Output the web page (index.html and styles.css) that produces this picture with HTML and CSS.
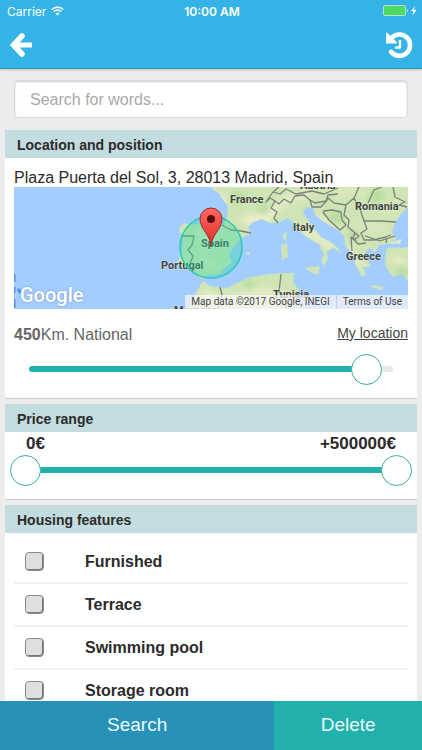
FILE: index.html
```html
<!DOCTYPE html>
<html lang="en">
<head>
    <meta charset="UTF-8">
    <meta name="viewport" content="width=device-width, initial-scale=1.0">
    <title>Search</title>
    <link rel="stylesheet" href="styles.css">
</head>
<body>
    <header class="header">
        <div class="status-bar">
            <div class="carrier">
                <span>Carrier</span>
                <svg width="13" height="10" viewBox="0 0 13 10" fill="none" stroke="#fff" stroke-width="1.5">
                    <path d="M.7 3.6Q6.5-1.4 12.3 3.6M2.7 5.7Q6.5 2.4 10.3 5.7"/>
                    <path d="M4.4 7.4Q6.5 5.7 8.6 7.4L6.5 9.6Z" fill="#fff" stroke="none"/>
                </svg>
            </div>
            <span class="clock">10:00 AM</span>
            <div class="battery">
                <svg width="34" height="12" viewBox="0 0 34 12">
                    <rect x=".5" y=".5" width="22" height="10" rx="1.5" fill="#4cd964" stroke="#b5e3ce"/>
                    <path d="M24 4Q26 5.500 24 7Z" fill="#d7f0fa"/>
                    <path d="M32 1L28 6.300H30.500L29.500 10.500L33.500 5H31Z" fill="#fff"/>
                </svg>
            </div>
        </div>
        <div class="nav-bar">
            <button class="icon-button" aria-label="Back">
                <svg width="26" height="26" viewBox="0 0 26 26" fill="none" stroke="#fff">
                    <path d="M13 4L4.500 13L13 22" stroke-width="5.500" stroke-linecap="round" stroke-linejoin="miter"/>
                    <path d="M5 13H22" stroke-width="5"/>
                    <path d="M22 11.500V14.500" stroke-width="2" stroke-linejoin="round" stroke-linecap="round"/>
                </svg>
            </button>
            <button class="icon-button" aria-label="History">
                <svg width="28" height="28" viewBox="0 0 28 28" fill="none" stroke="#fff">
                    <path d="M6 7.500A10.700 10.700 0 1 1 6 20.800" stroke-width="4.600" stroke-linecap="round"/>
                    <path d="M1.800 2.300V11.700H11.300Z" fill="#fff" stroke-width="1.500" stroke-linejoin="round"/>
                    <path d="M15 9V16.500H10" stroke-width="2.400" stroke-linejoin="round"/>
                </svg>
            </button>
        </div>
    </header>

    <main class="content">
        <div class="search-box">
            <input type="search" class="search-input" placeholder="Search for words..." aria-label="Search for words">
        </div>

        <section class="card">
            <h2>Location and position</h2>
            <div class="location">
                <p class="address">Plaza Puerta del Sol, 3, 28013 Madrid, Spain</p>
                <div class="map">
                    <svg class="map-canvas" viewBox="0 0 394 122" preserveAspectRatio="xMidYMid slice">
                        <defs>
                            <linearGradient id="pin" x1="0" y1="0" x2="0" y2="1">
                                <stop offset="0" stop-color="#ff6a61"/>
                                <stop offset="1" stop-color="#dc2d28"/>
                            </linearGradient>
                            <filter id="relief">
                                <feGaussianBlur stdDeviation="3"/>
                            </filter>
                            <clipPath id="landmass">
                                <path id="land" d="M197 0L201 4L206 7L209 13L214 19L213 30L209 38L200 38L189 36L178 38L170 36L165 41L166 46L169 51L168 65L163 76L168 81L176 83L180 87L189 92L194 88L206 87L211 81L218 75L215 69L219 60L228 51L237 46L234 40L239 35L248 32L256 36L264 36L274 31L279 36L287 46L297 53L305 57L310 68L307 74L310 79L314 71L313 64L320 61L327 67L324 61L315 54L307 50L300 41L295 34L289 26L292 20L299 21L301 28L310 35L324 43L330 49L331 58L338 66L340 71L342 79L348 90L352 87L349 80L357 80L353 72L351 65L356 61L361 65L365 58L374 57L382 52L378 45L382 34L389 25L394 20V0Z
                                    M372 63L379 58L386 61L394 60V94L388 87L379 90L371 79Z
                                    M176 122L180 109L184 102L189 94L196 99L213 101L223 96L236 90L256 87L267 86L280 86L279 95L285 103L282 111L290 122Z
                                    M291 81L306 79L304 88L298 86Z
                                    M267 58L273 56L274 70L268 73Z
                                    M269 47L273 44L272 54L269 52Z
                                    M356 98L370 100L367 103L359 101Z"/>
                            </clipPath>
                        </defs>
                        <rect width="394" height="122" fill="#a3ccff"/>
                        <use href="#land" fill="#cfe5b5"/>
                        <g clip-path="url(#landmass)">
                            <g filter="url(#relief)" fill="none" stroke="#f2efcf" stroke-width="5">
                                <path d="M228 33L258 26L272 12L296 6M203 5L212 18M286 40L320 62M333 60L345 80M378 72L394 78M190 104L206 114L250 104L278 112M301 31L326 41M234 36L256 33"/>
                                <path d="M320 5L350 5L372 21L388 16M344 38L371 42M180 43L192 50L187 76L207 80" stroke="#e2eac0"/>
                            </g>
                            <g filter="url(#relief)" fill="#b7dd9d">
                                <circle cx="224" cy="11" r="7"/>
                                <circle cx="249" cy="22" r="5"/>
                                <circle cx="322" cy="31" r="7"/>
                                <circle cx="339" cy="48" r="5"/>
                                <circle cx="362" cy="9" r="8"/>
                                <circle cx="388" cy="85" r="6"/>
                                <circle cx="235" cy="97" r="5"/>
                            </g>
                        </g>
                        <path d="M232 66L234 65L236 66L235 68Z M374 56L388 52L385 59Z M343 73L350 75L354 80L350 79Z M363 71L366 70L365 74Z" fill="#dceac2"/>
                        <path d="M374 60Q379 55 388 57L382 61Z" fill="#a3ccff"/>
                        <g fill="none" stroke="#7b8379" stroke-width="1.300" stroke-linejoin="round">
                            <path d="M208 38L217 43L227 44L237 46"/>
                            <path d="M168 49L180 49L178 58L174 63L179 69L175 79"/>
                            <path d="M264 36L260 31L263 25L257 21L261 14L256 11L252 15L259 5L265 0M261 14L265 17L270 12L277 16L281 9L290 8L296 13L301 16L312 14L314 8L324 7M259 5L266 7L272 2L282 7L298 4L310 7L324 1"/>
                            <path d="M296 13L298 20L307 20L314 12M309 24L318 23L327 25L328 33L332 38L326 43L315 33L309 25"/>
                            <path d="M313 10L320 16L332 18L340 11L345 0M332 18L330 28L335 33L334 40L341 46L345 49L340 53L337 50L338 64M340 11L346 22L350 34L367 34L382 35M350 34L353 42L347 46L350 53L360 53L372 50L377 48M341 46L339 51L344 57L352 56M351 49L366 54L381 49"/>
                            <path d="M354 16L360 3L368 0M379 0L381 10L391 15L385 18L393 20M373 51L372 56"/>
                            <path d="M206 100L208 108L204 122M267 87L265 105L271 110L272 122"/>
                        </g>
                        <path d="M0 87V95M0 100V106M0 112V121M4 102L7 106" fill="none" stroke="#5790dc" stroke-width="3"/>
                        <g class="map-label">
                            <text x="216" y="16">France</text>
                            <text x="341" y="23">Romania</text>
                            <text x="279" y="44">Italy</text>
                            <text x="332" y="73">Greece</text>
                            <text x="147" y="82">Portugal</text>
                            <text x="187" y="60">Spain</text>
                            <text x="286" y="2">Austria</text>
                            <text x="259" y="111">Tunisia</text>
                            <text x="160" y="127">Morocco</text>
                        </g>
                        <circle cx="197" cy="60" r="31" fill="#35d8a4" fill-opacity=".38" stroke="#2bcab0" stroke-width="1.500"/>
                        <path d="M197 59C197 49 186 42 186 32A11 11 0 0 1 208 32C208 42 197 49 197 59Z" fill="url(#pin)" stroke="#9e2a2c"/>
                        <circle cx="197" cy="32" r="4" fill="#560d0d"/>
                    </svg>
                    <span class="map-logo">Google</span>
                    <div class="map-credits">
                        <span>Map data ©2017 Google, INEGI</span>
                        <a href="#">Terms of Use</a>
                    </div>
                </div>
                <div class="distance">
                    <label for="distance"><b>450</b>Km. National</label>
                    <a href="#">My location</a>
                </div>
                <div class="distance-slider">
                    <input type="range" class="slider" id="distance" min="0" max="466" value="450">
                </div>
            </div>
        </section>

        <section class="card">
            <h2>Price range</h2>
            <div class="price">
                <div class="price-labels">
                    <label for="priceMin">0€</label>
                    <label for="priceMax">+500000€</label>
                </div>
                <div class="price-slider">
                    <input type="range" class="slider" id="priceMin" min="0" max="500000" value="0">
                    <input type="range" class="slider" id="priceMax" min="0" max="500000" value="500000">
                </div>
            </div>
        </section>

        <section class="card">
            <h2>Housing features</h2>
            <ul class="features">
                <li><label><input type="checkbox">Furnished</label></li>
                <li><label><input type="checkbox">Terrace</label></li>
                <li><label><input type="checkbox">Swimming pool</label></li>
                <li><label><input type="checkbox">Storage room</label></li>
            </ul>
        </section>
    </main>

    <footer class="actions">
        <button class="search">Search</button>
        <button class="delete">Delete</button>
    </footer>
</body>
</html>
```
FILE: styles.css
```css
:root {
    --header-bg: #34b4e6;
    --page-bg: #ececec;
    --title-bg: #c3dcdf;
    --accent: #21b0aa;
    --search-bg: #2891b8;
    --text-color: #2b2b2b;
    --muted: #666666;
}

* {
    margin: 0;
    padding: 0;
    box-sizing: border-box;
}

body {
    display: flex;
    flex-direction: column;
    height: 100vh;
    background-color: var(--page-bg);
    color: var(--text-color);
    font-family: "Liberation Sans", Arial, sans-serif;
}

button {
    border: none;
    background: none;
    font-family: inherit;
    cursor: pointer;
}

svg {
    display: block;
}

/* Header */
.header {
    flex: none;
    background-color: var(--header-bg);
    border-bottom: 1px solid #3198c2;
    box-shadow: 0 1px 2px rgba(0, 0, 0, 0.2);
}

.status-bar {
    display: grid;
    grid-template-columns: 1fr auto 1fr;
    align-items: center;
    height: 22px;
    padding: 0 5px 0 7px;
    color: #ffffff;
    font-family: Inter, sans-serif;
    font-size: 12px;
}

.carrier {
    display: flex;
    align-items: center;
    gap: 5px;
}

.clock {
    font-weight: 600;
}

.battery {
    justify-self: end;
}

.nav-bar {
    display: flex;
    justify-content: space-between;
    align-items: center;
    height: 46px;
    padding: 0 9px;
}

/* Content */
.content {
    flex: 1;
    min-height: 0;
    overflow-y: auto;
    scrollbar-width: none;
    padding: 0 5px;
}

.search-box {
    padding: 11px 9px 12px;
}

.search-input {
    display: block;
    width: 100%;
    height: 38px;
    padding: 1px 15px 0;
    border: 1px solid #dadada;
    border-radius: 4px;
    background-color: #ffffff;
    box-shadow: inset 0 1px 2px rgba(0, 0, 0, 0.2);
    font-family: inherit;
    font-size: 16px;
    appearance: none;
}

.search-input::placeholder {
    color: #a9a9a9;
}

.card {
    margin-bottom: 5px;
    background-color: #ffffff;
    border-bottom: 1px solid #cccccc;
}

.card h2 {
    height: 28px;
    padding: 0 12px;
    background-color: var(--title-bg);
    font-size: 14px;
    line-height: 30px;
}

.location {
    padding: 11px 9px 13px;
}

.address {
    font-size: 16px;
    line-height: 18px;
}

/* Map */
.map {
    position: relative;
    overflow: hidden;
}

.map-canvas {
    width: 100%;
}

.map-label {
    fill: #40443f;
    stroke: #f0f3e6;
    stroke-width: 1px;
    stroke-opacity: 0.6;
    paint-order: stroke;
    font: 700 11px Roboto, sans-serif;
}

.map-logo {
    position: absolute;
    left: 6px;
    bottom: 1px;
    color: #ffffff;
    font: 500 20px/26px Roboto, sans-serif;
    text-shadow: 0 0 2px #7792b8;
}

.map-credits {
    position: absolute;
    right: 0;
    bottom: 0;
    display: flex;
    color: #444444;
    font: 10px/14px Roboto, sans-serif;
}

.map-credits > * {
    padding: 0 6px;
    background-color: rgba(245, 245, 245, 0.75);
}

.map-credits a {
    border-left: 1px solid #b9d0ec;
    color: #444444;
    text-decoration: none;
}

.distance {
    display: flex;
    justify-content: space-between;
    padding-top: 15px;
    color: var(--muted);
    font-size: 16px;
    line-height: 22px;
}

.distance a {
    color: #444444;
    font-size: 14px;
    line-height: 18px;
}

/* Sliders */
.distance-slider {
    padding: 7px 15px 0;
}

.slider {
    display: block;
    width: 100%;
    height: 32px;
    background: none;
    appearance: none;
}

.slider::-webkit-slider-runnable-track {
    height: 6px;
    border-radius: 3px;
}

.distance-slider .slider::-webkit-slider-runnable-track {
    background: linear-gradient(to right, var(--accent) 93%, #e9e9e9 93%);
}

.slider::-webkit-slider-thumb {
    width: 31px;
    height: 31px;
    margin-top: -12px;
    border: 1px solid #3aaea2;
    border-radius: 50%;
    background-color: #ffffff;
    appearance: none;
    pointer-events: auto;
}

.price {
    padding: 2px 5px 13px;
}

.price-labels {
    display: flex;
    justify-content: space-between;
    padding: 0 16px;
    font-size: 17px;
    font-weight: bold;
    line-height: 20px;
}

.price-slider {
    display: grid;
    background: linear-gradient(var(--accent), var(--accent)) center / calc(100% - 32px) 6px no-repeat;
}

/* both handles share one track */
.price-slider .slider {
    grid-area: 1 / 1;
    pointer-events: none;
}

/* Features */
.features {
    padding: 8px 9px 0;
    list-style: none;
}

.features li {
    border-bottom: 2px solid #f0f0f0;
}

.features label {
    display: flex;
    align-items: center;
    gap: 41px;
    height: 41px;
    padding-left: 11px;
    font-size: 16px;
    font-weight: bold;
}

.features input {
    width: 19px;
    height: 19px;
    border: 1px solid #8a8a8a;
    border-radius: 4px;
    background-color: #dfdfdf;
    box-shadow: inset -1px -1px 0 #777777;
    appearance: none;
}

.features input:checked {
    background-color: var(--accent);
}

/* Bottom buttons */
.actions {
    flex: none;
    display: flex;
    height: 49px;
}

.actions button {
    padding-bottom: 2px;
    color: #e9fbff;
    font-size: 19px;
}

.actions .search {
    flex: 65;
    background-color: var(--search-bg);
}

.actions .delete {
    flex: 35;
    background-color: var(--accent);
}
```
